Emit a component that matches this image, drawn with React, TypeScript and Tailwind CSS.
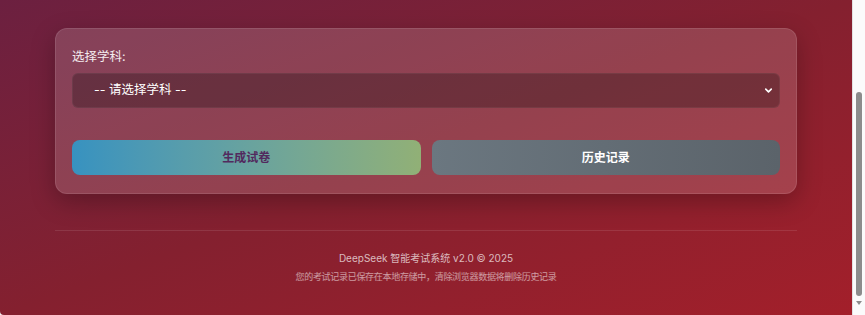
import { ChevronDown } from "lucide-react";

const font = { fontFamily: '"Inter", "Noto Sans CJK SC", sans-serif' };

export default function App() {
  return (
    <div className="flex h-[315px] w-[865px] flex-col overflow-hidden bg-[#f4f4f4]" style={font}>
      <div className="flex h-[312px] flex-1">
        <main className="flex w-[852px] flex-col items-center overflow-hidden rounded-bl-[4px] bg-gradient-to-br from-[#6c2040] via-[#84202f] to-[#a31f2a] pt-[28px]">
          <section className="w-[742px] rounded-[12px] border border-white/10 bg-white/15 px-4 pb-[18px] pt-[17px] shadow-[0_8px_24px_rgba(0,0,0,0.25)]">
            <label className="mb-[5px] block text-[12.5px] leading-[22px] text-white/90">选择学科:</label>
            <div className="flex h-[35px] items-center justify-between rounded-[6px] border border-white/5 bg-black/25 pl-[21px] pr-[5px]">
              <span className="text-[12.5px] text-white">-- 请选择学科 --</span>
              <ChevronDown className="h-[11px] w-[11px] text-white" strokeWidth={3.5} />
            </div>
            <div className="mt-[32px] flex gap-[11px]">
              <button className="h-[35px] flex-1 rounded-[8px] bg-gradient-to-r from-[#3792c0] to-[#91b076] text-[12px] font-bold text-[#522a5e]">
                生成试卷
              </button>
              <button className="h-[35px] flex-1 rounded-[8px] bg-gradient-to-r from-[#6b7780] to-[#5b636a] text-[12px] font-bold text-white">
                历史记录
              </button>
            </div>
          </section>
          <footer className="mt-[36px] w-[742px] border-t border-white/10 pt-[19px] text-center">
            <p className="text-[10px] leading-[16px] text-white/70">DeepSeek 智能考试系统 v2.0 © 2025</p>
            <p className="mt-[3px] text-[9px] leading-[16px] tracking-[-0.3px] text-white/55">
              您的考试记录已保存在本地存储中，清除浏览器数据将删除历史记录
            </p>
          </footer>
        </main>
        <div className="flex w-[13px] flex-col items-center border-l border-[#e2e2e2] bg-[#fbfbfb] pb-[4px] pt-[92px]">
          <div className="h-[204px] w-[6px] rounded-full bg-[#8c8c8c]" />
          <div className="mt-[5px] h-0 w-0 border-x-[3px] border-t-[4px] border-x-transparent border-t-[#8c8c8c]" />
        </div>
      </div>
    </div>
  );
}
